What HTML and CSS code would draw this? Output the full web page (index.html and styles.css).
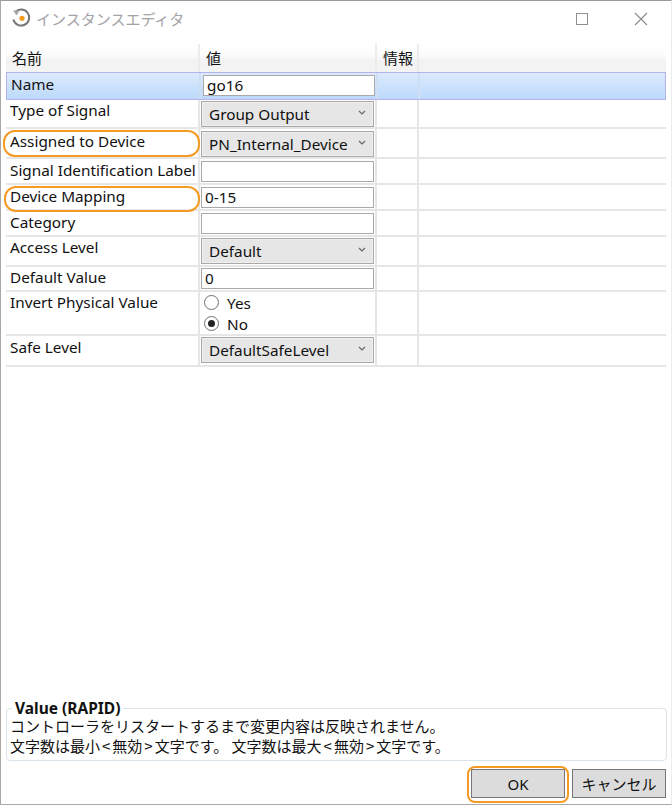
FILE: index.html
```html
<!DOCTYPE html>
<html lang="ja">
<head>
<meta charset="utf-8">
<title>インスタンスエディタ</title>
<link rel="stylesheet" href="styles.css">
</head>
<body>
<div class="window">
  <header class="titlebar">
    <svg class="app-icon" width="20" height="20" viewBox="0 0 20 20">
      <path d="M4.2 4.2A8 8 0 1 1 2.4 11.5" fill="none" stroke="#777" stroke-width="2"/>
      <path d="M2 2.4 8.6 2.4 5.6 7.4Z" fill="#a5a5a5"/>
      <circle cx="11" cy="10.3" r="2.6" fill="#f59a23"/>
    </svg>
    <span class="title">インスタンスエディタ</span>
    <span class="spacer"></span>
    <span class="win-btn max"></span>
    <svg class="win-btn close" width="14" height="14" viewBox="0 0 14 14"><path d="M1 1 13 13M13 1 1 13" stroke="#8a8a8a" stroke-width="1.1"/></svg>
  </header>

  <div class="table">
    <div class="row head">
      <div class="cell">名前</div>
      <div class="cell">値</div>
      <div class="cell">情報</div>
      <div class="cell"></div>
    </div>
    <div class="row selected h28">
      <div class="cell name">Name</div>
      <div class="cell value"><input class="text-input sel-input" value="go16"></div>
      <div class="cell"></div><div class="cell"></div>
    </div>
    <div class="row h29">
      <div class="cell name">Type of Signal</div>
      <div class="cell value combo-cell"><div class="combo"><span>Group Output</span><svg class="chev" width="8" height="5" viewBox="0 0 8 5"><path d="M1 1 4 4 7 1" fill="none" stroke="#666" stroke-width="1.2"/></svg></div></div>
      <div class="cell"></div><div class="cell"></div>
    </div>
    <div class="row h30">
      <div class="cell name low2">Assigned to Device</div>
      <div class="cell value"><div class="combo"><span>PN_Internal_Device</span><svg class="chev" width="8" height="5" viewBox="0 0 8 5"><path d="M1 1 4 4 7 1" fill="none" stroke="#666" stroke-width="1.2"/></svg></div></div>
      <div class="cell"></div><div class="cell"></div>
    </div>
    <div class="row h26">
      <div class="cell name low1">Signal Identification Label</div>
      <div class="cell value"><input class="text-input"></div>
      <div class="cell"></div><div class="cell"></div>
    </div>
    <div class="row h26">
      <div class="cell name low1">Device Mapping</div>
      <div class="cell value"><input class="text-input" value="0-15"></div>
      <div class="cell"></div><div class="cell"></div>
    </div>
    <div class="row h26">
      <div class="cell name low1">Category</div>
      <div class="cell value"><input class="text-input"></div>
      <div class="cell"></div><div class="cell"></div>
    </div>
    <div class="row h30">
      <div class="cell name">Access Level</div>
      <div class="cell value combo-cell"><div class="combo"><span>Default</span><svg class="chev" width="8" height="5" viewBox="0 0 8 5"><path d="M1 1 4 4 7 1" fill="none" stroke="#666" stroke-width="1.2"/></svg></div></div>
      <div class="cell"></div><div class="cell"></div>
    </div>
    <div class="row h25">
      <div class="cell name">Default Value</div>
      <div class="cell value combo-cell"><input class="text-input" value="0"></div>
      <div class="cell"></div><div class="cell"></div>
    </div>
    <div class="row h44">
      <div class="cell name">Invert Physical Value</div>
      <div class="cell radios">
        <div class="radio-line"><span class="radio"></span>Yes</div>
        <div class="radio-line"><span class="radio on"></span>No</div>
      </div>
      <div class="cell"></div><div class="cell"></div>
    </div>
    <div class="row h31">
      <div class="cell name low1">Safe Level</div>
      <div class="cell value combo-cell"><div class="combo"><span>DefaultSafeLevel</span><svg class="chev" width="8" height="5" viewBox="0 0 8 5"><path d="M1 1 4 4 7 1" fill="none" stroke="#666" stroke-width="1.2"/></svg></div></div>
      <div class="cell"></div><div class="cell"></div>
    </div>
  </div>

  <div class="fill"></div>

  <fieldset class="info">
    <legend>Value (RAPID)</legend>
    <p>コントローラをリスタートするまで変更内容は反映されません。</p>
    <p>文字数は最小<span class="sym">&lt;</span>無効<span class="sym">&gt;</span>文字です。 文字数は最大<span class="sym">&lt;</span>無効<span class="sym">&gt;</span>文字です。</p>
  </fieldset>

  <footer class="buttons">
    <button class="btn ok">OK</button>
    <button class="btn cancel">キャンセル</button>
  </footer>

  <div class="mark mark-assigned"></div>
  <div class="mark mark-mapping"></div>
  <div class="mark mark-ok"></div>
</div>
</body>
</html>
```

FILE: styles.css
```css
* { box-sizing: border-box; }
html, body { margin: 0; padding: 0; background: #fff; }
body {
  font-family: "Noto Sans", "Noto Sans CJK JP", sans-serif;
  font-size: 15.3px;
  color: #111;
}
.window {
  position: relative;
  width: 672px;
  height: 805px;
  display: flex;
  flex-direction: column;
  border-top: 1px solid #9a9a9a;
  border-left: 1px solid #a8a8a8;
  border-bottom: 1px solid #a8a8a8;
  border-right: 1px solid #ececec;
  background: #fff;
  overflow: hidden;
}
.titlebar {
  height: 43px;
  flex: none;
  display: flex;
  align-items: center;
  padding: 0 23px 8px 10px;
}
.app-icon { flex: none; margin-bottom: 2px; }
.title { margin-left: 5px; font-size: 15px; color: #a3a3a8; font-family: "Noto Sans CJK JP", sans-serif; }
.spacer { flex: 1; }
.win-btn { display: block; flex: none; }
.max { width: 12px; height: 12px; border: 1px solid #8f8f8f; margin-right: 46px; }
.close { width: 14px; height: 14px; }

.table { flex: none; margin: 0 5px; }
.row {
  display: grid;
  grid-template-columns: 194px 177px 42px 247px;
  border-bottom: 2px solid #e6e6e6;
}
.cell { border-right: 2px solid #e6e6e6; min-width: 0; }
.cell:last-child { border-right: 0; }
.head {
  height: 28px;
  border-bottom: 0;
  background: linear-gradient(#fff 0, #fbfbfb 40%, #f2f2f3 60%, #f4f4f5 100%);
  line-height: 28px;
  font-family: "Noto Sans CJK JP", sans-serif;
  font-size: 15px;
}
.head .cell { padding-left: 6px; border-right-color: #ececec; }
.selected {
  border: 1px solid #b6b2ee;
  background: linear-gradient(#dcebfd, #bcd9fb);
  height: 28px;
}
.selected .cell { border-right-color: #cfdef2; }
.name { padding: 0 0 0 4px; line-height: 20px; white-space: nowrap; }
.selected .name { padding: 1px 0 0 4px; }
.name.low1 { padding-top: 1px; }
.name.low2 { padding-top: 2px; }
.h25 { height: 25px; }
.h26 { height: 26px; }
.h28 { height: 28px; }
.h29 { height: 29px; }
.h30 { height: 30px; }
.h31 { height: 31px; }
.h44 { height: 44px; }
.value { padding: 2px 1px 0 1px; }
.combo-cell { padding-top: 1px; }
.text-input {
  display: block;
  width: 173px;
  height: 21px;
  border: 1px solid #a9a9a9;
  background: #fff;
  font: inherit;
  color: #111;
  padding: 0 3px 2px;
  outline: 0;
}
.sel-input { width: 172px; margin-left: 1px; }
.combo {
  width: 173px;
  height: 26px;
  border: 1px solid #a9a9a9;
  background: #e6e6e6;
  box-shadow: inset 0 0 0 1px #efefef;
  display: flex;
  align-items: center;
  justify-content: space-between;
  padding: 0 7px 0 7px;
  white-space: nowrap;
}
.chev { flex: none; margin-bottom: 3px; }
.radios { padding: 0 0 0 4px; }
.radio-line { display: flex; align-items: center; gap: 8px; height: 21px; }
.radio {
  width: 15px;
  height: 15px;
  border: 1px solid #6f6f6f;
  border-radius: 50%;
  background: #fff;
  display: block;
  position: relative;
}
.radio.on::after {
  content: "";
  position: absolute;
  left: 3px;
  top: 3px;
  width: 7px;
  height: 7px;
  border-radius: 50%;
  background: #222;
}
.fill { flex: 1; }
.info {
  flex: none;
  margin: 0 5px;
  width: 661px;
  height: 60px;
  padding: 0 0 0 3px;
  border: 1px solid #dbe3ea;
  border-radius: 4px;
  font-family: "Noto Sans CJK JP", sans-serif;
  font-size: 15px;
}
.info legend {
  padding: 0 3px;
  margin-left: 2px;
  font-family: "Noto Sans", sans-serif;
  font-size: 15.5px;
  font-weight: 700;
  line-height: 15px;
}
.info p { margin: 0; line-height: 19.5px; }
.sym { padding: 0 2px; }
.buttons {
  flex: none;
  height: 43px;
  display: flex;
  justify-content: flex-end;
  gap: 7px;
  padding: 8px 5px 0 0;
}
.btn {
  height: 29px;
  border: 1px solid #777;
  background: #dcdcdc;
  font-family: "Noto Sans", "Noto Sans CJK JP", sans-serif;
  font-size: 15px;
  color: #111;
  padding: 0;
}
.ok { width: 94px; }
.cancel { width: 94px; }
.mark {
  position: absolute;
  border: 2px solid #f59a23;
  border-radius: 12px;
  pointer-events: none;
}
.mark-assigned { left: 2px; top: 129px; width: 197px; height: 27px; }
.mark-mapping { left: 3px; top: 185px; width: 196px; height: 26px; }
.mark-ok { left: 466px; top: 765px; width: 102px; height: 37px; border-radius: 8px; }
```
